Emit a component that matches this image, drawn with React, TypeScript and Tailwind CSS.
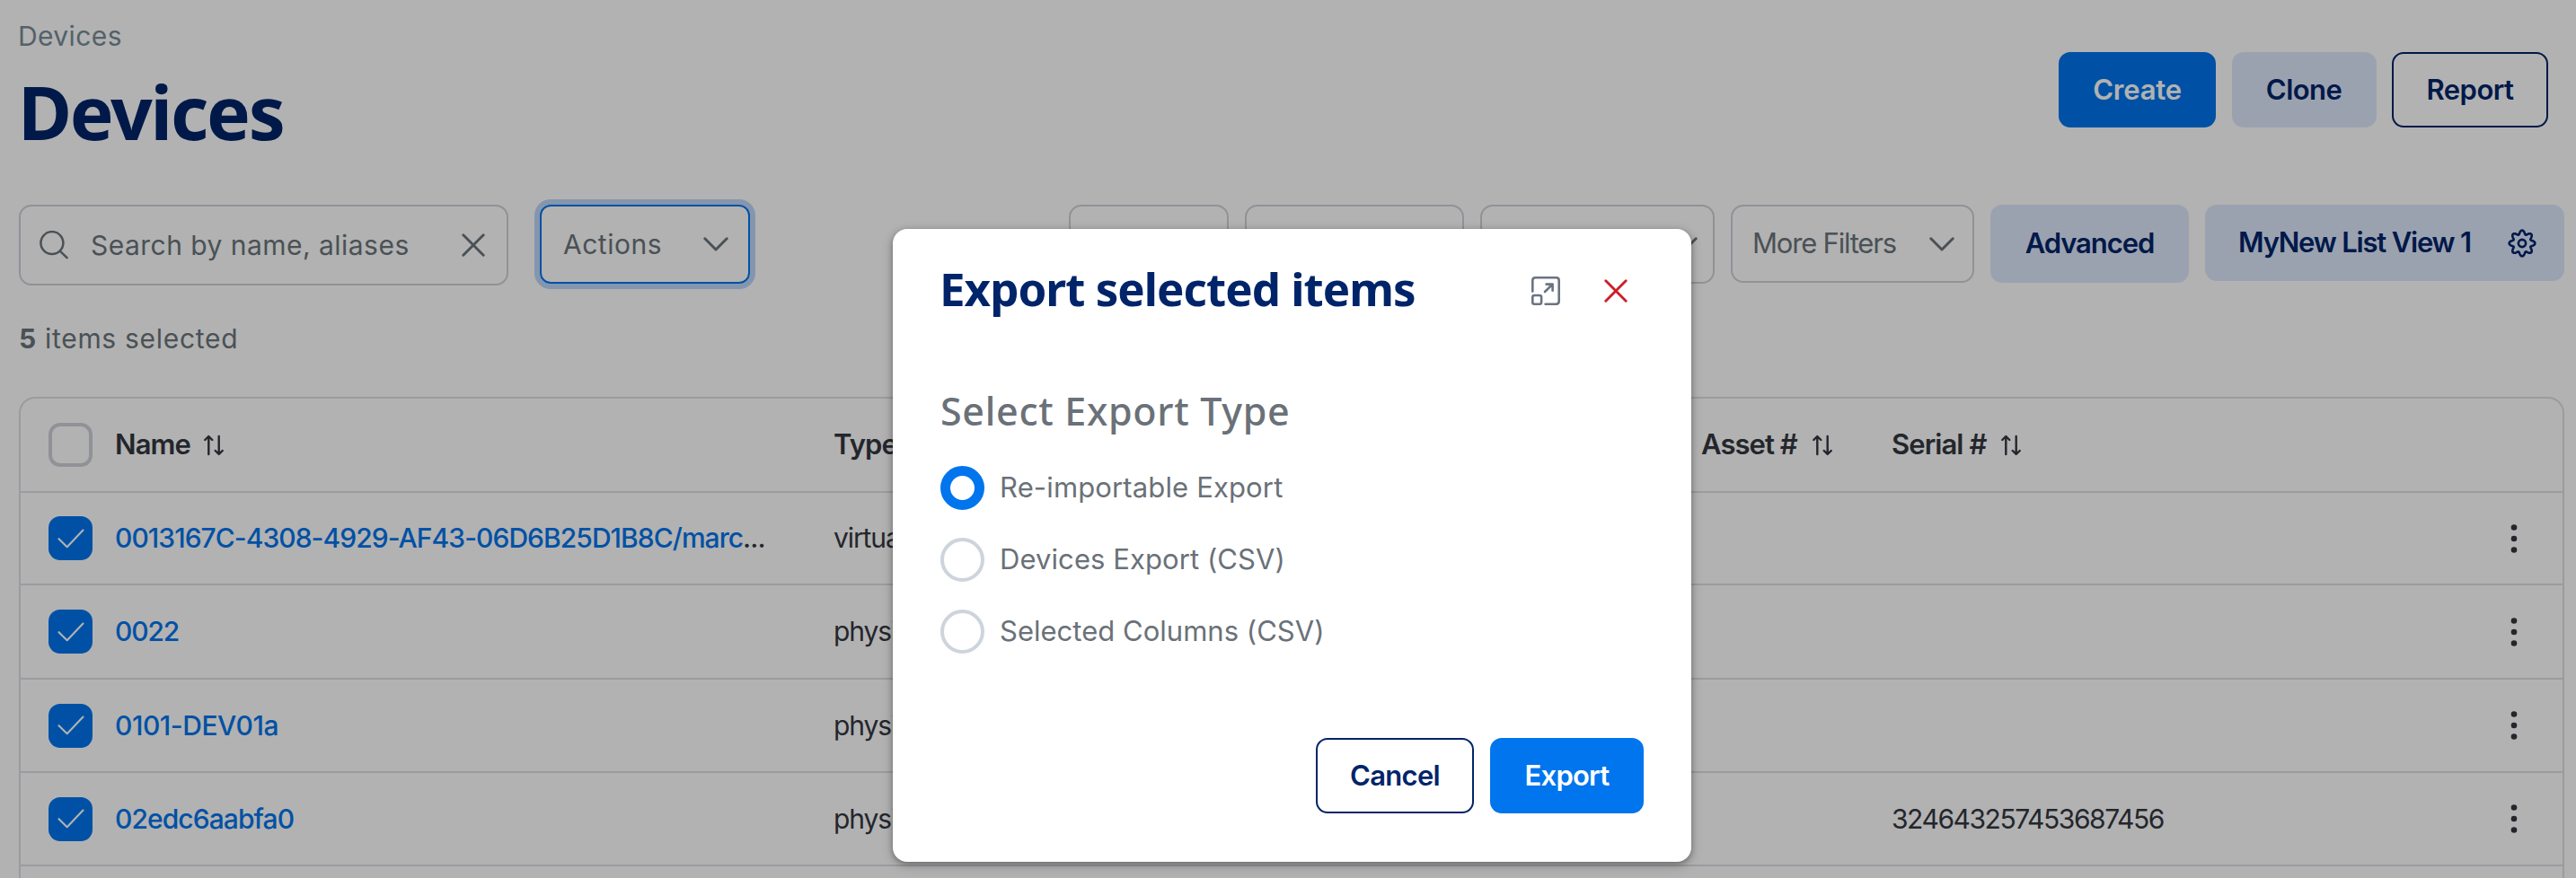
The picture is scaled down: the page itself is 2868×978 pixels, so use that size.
import type { ReactNode } from "react";

const gearPath = (() => {
  const points: string[] = [];
  for (let i = 0; i < 160; i++) {
    const t = (i / 160) * Math.PI * 2;
    const r = 12.4 + 2.1 * Math.cos(8 * t) - 0.15 * Math.cos(16 * t);
    points.push(`${(16 + r * Math.sin(t)).toFixed(2)} ${(16 - r * Math.cos(t)).toFixed(2)}`);
  }
  return `M${points.join("L")}Z`;
})();

function GearIcon() {
  return (
    <svg viewBox="0 0 32 32" className="h-8 w-8 shrink-0" fill="none" stroke="currentColor" strokeWidth="2.6" strokeLinejoin="round">
      <path d={gearPath} />
      <circle cx="16" cy="16" r="4.1" />
    </svg>
  );
}

function SearchIcon() {
  return (
    <svg viewBox="0 0 32 32" className="h-8 w-8 shrink-0" fill="none" stroke="currentColor" strokeWidth="2.5" strokeLinecap="round">
      <circle cx="13.9" cy="13.6" r="12.5" />
      <path d="M23 22.8L30.6 30.2" />
    </svg>
  );
}

function CrossIcon({ className }: { className: string }) {
  return (
    <svg viewBox="0 0 26 26" className={className} fill="none" stroke="currentColor" strokeWidth="2.9" strokeLinecap="round">
      <path d="M1.8 1.8L24.2 24.2M24.2 1.8L1.8 24.2" />
    </svg>
  );
}

function ChevronIcon() {
  return (
    <svg viewBox="0 0 28 16" className="h-4 w-7 shrink-0" fill="none" stroke="currentColor" strokeWidth="3" strokeLinecap="round" strokeLinejoin="round">
      <path d="M1.8 1.8L14 14L26.2 1.8" />
    </svg>
  );
}

function SortIcon() {
  return (
    <svg viewBox="0 0 22 24" className="h-6 w-[22px] shrink-0" fill="none" stroke="currentColor" strokeWidth="2.4" strokeLinecap="round" strokeLinejoin="round">
      <path d="M5.3 22V2.2M1.3 6L5.3 2L9.3 6M16.7 2V21.8M12.7 18L16.7 22L20.7 18" />
    </svg>
  );
}

function ExpandIcon() {
  return (
    <svg viewBox="0 0 32 32" className="h-8 w-8" fill="none" stroke="currentColor" strokeWidth="2.6" strokeLinecap="round" strokeLinejoin="round">
      <path d="M1.3 16.6V4.4Q1.3 1.3 4.4 1.3H27.6Q30.7 1.3 30.7 4.4V27.6Q30.7 30.7 27.6 30.7H15.6" />
      <rect x="1.3" y="21" width="9.8" height="9.7" rx="2" />
      <path d="M15 17L23.4 8.8M16.6 8.6H23.6V15.8" />
    </svg>
  );
}

function CheckedBox() {
  return (
    <div className="flex h-[49px] w-[49px] shrink-0 items-center justify-center rounded-[13px] bg-[#0075ed] text-white">
      <svg viewBox="0 0 30 22" className="h-[22px] w-[30px]" fill="none" stroke="currentColor" strokeWidth="2.1" strokeLinecap="round" strokeLinejoin="round">
        <path d="M1.5 11.2L10.7 20.2L28.5 1.5" />
      </svg>
    </div>
  );
}

function Button({ className, children }: { className: string; children: ReactNode }) {
  return <button className={`flex items-center rounded-[13px] text-[31px] font-semibold whitespace-nowrap ${className}`}>{children}</button>;
}

const rows = [
  { name: "0013167C-4308-4929-AF43-06D6B25D1B8C/marc", more: true, type: "virtual", serial: "", height: "h-[103px]", tracking: "tracking-[-0.96px]" },
  { name: "0022", more: false, type: "physical", serial: "", height: "h-[105px]", tracking: "tracking-[-1.15px]" },
  { name: "0101-DEV01a", more: false, type: "physical", serial: "", height: "h-[104px]", tracking: "tracking-[-0.45px]" },
  { name: "02edc6aabfa0", more: false, type: "physical", serial: "324643257453687456", height: "h-[104px]", tracking: "tracking-[-0.92px]" },
];

const columns = "grid grid-cols-[105px_800px_966px_212px_1fr] items-center border-b-2 border-[#dedfe6]";

const exportTypes = [
  { label: "Re-importable Export", checked: true, tracking: "tracking-[0.14px]" },
  { label: "Devices Export (CSV)", checked: false, tracking: "tracking-[0.08px]" },
  { label: "Selected Columns (CSV)", checked: false, tracking: "tracking-[0.02px]" },
];

export default function App() {
  return (
    <div className="relative h-[978px] w-[2868px] overflow-hidden bg-white font-['Inter',sans-serif]">
      <header className="flex h-[228px] items-start justify-between pr-[31px] pl-5">
        <div className="pt-5">
          <div className="text-[30px] leading-10 tracking-[0.4px] text-[#798c97]">Devices</div>
          <h1 className="mt-[14px] font-['Noto_Sans',sans-serif] text-[82px] leading-[100px] font-bold tracking-[-2.18px] text-[#002469]">Devices</h1>
        </div>
        <div className="flex gap-[17.5px] pt-[58px]">
          <Button className="h-[84px] w-[175px] justify-center bg-[#0075ed] tracking-[-0.21px] text-white">Create</Button>
          <Button className="h-[84px] w-[161px] justify-center bg-[#dfe9fb] tracking-[-0.57px] text-[#002469]">Clone</Button>
          <Button className="h-[84px] w-[174px] justify-center border-2 border-[#002469] tracking-[-0.52px] text-[#002469]">Report</Button>
        </div>
      </header>

      <div className="flex h-[90px] items-start pr-[13px] pl-[21px] text-[#6b757b]">
        <div className="flex h-[90px] w-[545px] items-center rounded-[14px] border-2 border-[#ced2d9] pl-[21px]">
          <SearchIcon />
          <span className="ml-[25px] text-[30px] tracking-[0.47px] whitespace-nowrap">Search by name, aliases</span>
          <CrossIcon className="mr-[24px] ml-auto h-[26px] w-[26px]" />
        </div>
        <div className="ml-[35px] flex h-[88px] w-[234px] items-center justify-between rounded-[12px] border-2 border-[#0075ed] pr-[22px] pl-[24px] shadow-[0_0_0_6px_#bdd7fa]">
          <span className="text-[30px] tracking-[0.5px]">Actions</span>
          <ChevronIcon />
        </div>
        <div className="ml-auto flex items-start gap-[18px]">
          <div className="h-[88px] w-[178px] rounded-[14px] border-2 border-[#ced2d9]" />
          <div className="h-[88px] w-[244px] rounded-[14px] border-2 border-[#ced2d9]" />
          <div className="flex h-[88px] w-[261px] items-center justify-end rounded-[14px] border-2 border-[#ced2d9] pr-[17px]">
            <ChevronIcon />
          </div>
          <div className="flex h-[87px] w-[271px] items-center justify-between rounded-[14px] border-2 border-[#ced2d9] pr-5 pl-[22px]">
            <span className="text-[31px] tracking-[-1.2px] whitespace-nowrap">More Filters</span>
            <ChevronIcon />
          </div>
          <Button className="h-[87px] w-[221px] justify-center bg-[#dfe9fb] tracking-[-1.07px] text-[#002469]">Advanced</Button>
          <Button className="h-[85px] w-[400px] justify-between bg-[#dfe9fb] pr-[31px] pl-[37px] tracking-[-1.2px] text-[#002469]">
            MyNew List View 1
            <GearIcon />
          </Button>
        </div>
      </div>

      <div className="mt-[39px] pl-[21px] text-[30px] leading-10 tracking-[0.7px] text-[#6b757b]">
        <strong className="font-bold">5</strong> items selected
      </div>

      <div className="mt-[45px] mr-[13px] ml-[21px] h-[560px] rounded-t-[18px] border-2 border-[#dedfe6] text-[#34373f]">
        <div className={`${columns} h-[105px] text-[31px] font-semibold`}>
          <div className="pl-[31px]">
            <div className="h-[49px] w-[49px] rounded-[13px] border-4 border-[#ced2d9]" />
          </div>
          <div className="flex items-center gap-[15px] tracking-[-0.88px]">
            Name <SortIcon />
          </div>
          <div className="tracking-[-0.9px]">Type</div>
          <div className="flex items-center gap-[17px] tracking-[-0.95px]">
            Asset # <SortIcon />
          </div>
          <div className="flex items-center gap-[17px] tracking-[-0.93px]">
            Serial # <SortIcon />
          </div>
        </div>
        {rows.map((row) => (
          <div key={row.name} className={`${columns} ${row.height} text-[30px]`}>
            <div className="pl-[31px]">
              <CheckedBox />
            </div>
            <div className={`font-medium whitespace-nowrap ${row.tracking}`}>
              <span className="text-[#0075ed]">{row.name}</span>
              {row.more && "..."}
            </div>
            <div className="tracking-[-1.1px]">{row.type}</div>
            <div />
            <div className="flex items-center justify-between pr-[50px] tracking-[-1.44px]">
              <span>{row.serial}</span>
              <svg viewBox="0 0 8 32" className="h-8 w-2" fill="currentColor">
                <circle cx="4" cy="3.5" r="3.3" />
                <circle cx="4" cy="16" r="3.3" />
                <circle cx="4" cy="28.5" r="3.3" />
              </svg>
            </div>
          </div>
        ))}
      </div>

      <div className="absolute inset-0 flex items-start bg-black/30 pt-[255px] pl-[994px]">
        <div className="h-[705px] w-[889px] rounded-[16px] bg-white px-[53px] pt-[37px] shadow-[0_2px_6px_rgba(0,0,0,0.3),0_4px_14px_rgba(0,0,0,0.2)]">
          <div className="flex h-16 items-center justify-between pr-[18px]">
            <h2 className="-ml-px pb-[5px] font-['Noto_Sans',sans-serif] text-[51px] leading-[59px] font-bold tracking-[-0.95px] whitespace-nowrap text-[#002469]">Export selected items</h2>
            <div className="flex items-center gap-[49px]">
              <span className="text-[#6b7482]">
                <ExpandIcon />
              </span>
              <CrossIcon className="h-[26px] w-[26px] text-[#c92127]" />
            </div>
          </div>
          <h3 className="mt-[72px] font-['Noto_Sans',sans-serif] text-[43px] leading-[60px] font-medium tracking-[0.7px] text-[#6a7178]">Select Export Type</h3>
          <div className="mt-[31px] flex flex-col gap-[31px]">
            {exportTypes.map((option) => (
              <label key={option.label} className="flex h-[49px] items-center gap-[17px]">
                <span className={option.checked ? "h-[49px] w-[49px] rounded-full border-[11px] border-[#0075ed]" : "h-[49px] w-[49px] rounded-full border-4 border-[#ced4dc]"} />
                <span className={`text-[31px] text-[#6a7178] ${option.tracking}`}>{option.label}</span>
              </label>
            ))}
          </div>
          <div className="mt-[94px] flex justify-end gap-[18px]">
            <Button className="h-[84px] w-[176px] justify-center border-2 border-[#002469] tracking-[-0.7px] text-[#002469]">Cancel</Button>
            <Button className="h-[84px] w-[171px] justify-center bg-[#0075ed] tracking-[-0.77px] text-white">Export</Button>
          </div>
        </div>
      </div>
    </div>
  );
}
